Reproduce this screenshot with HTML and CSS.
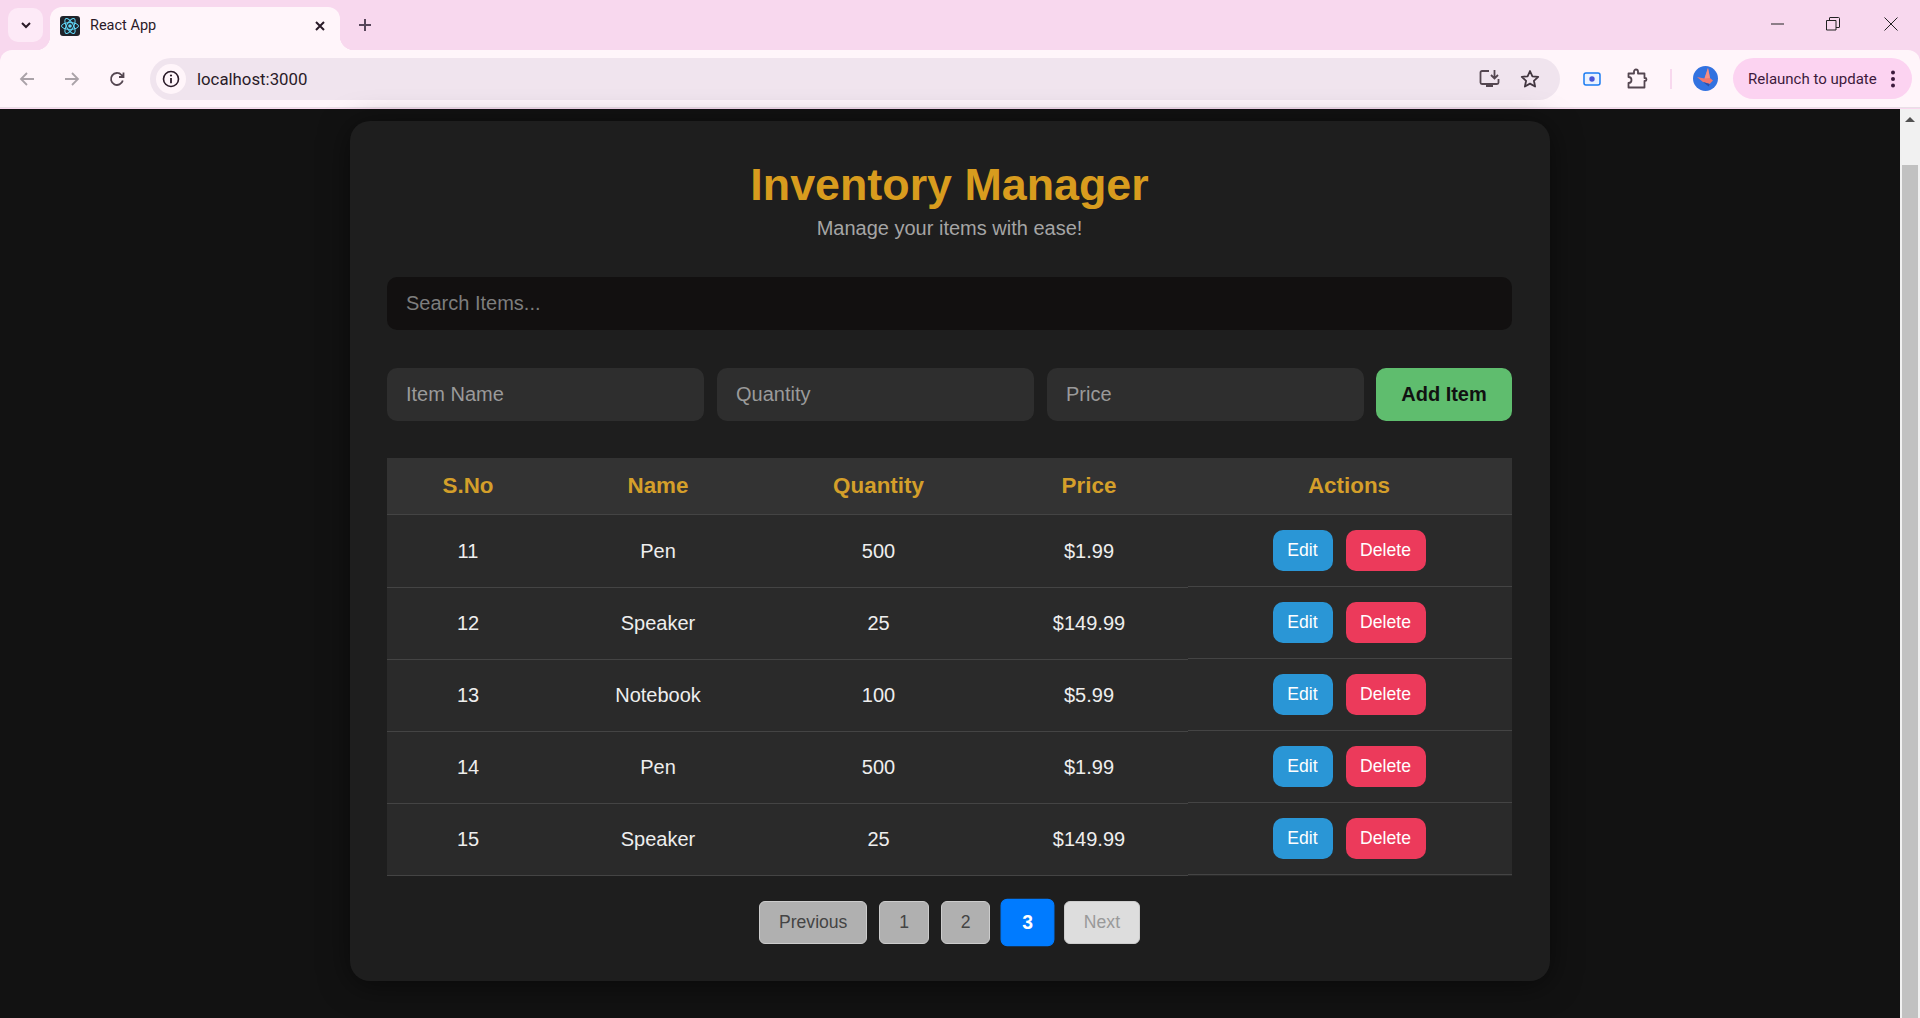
FILE: index.html
```html
<!DOCTYPE html>
<html lang="en">
<head>
    <meta charset="UTF-8">
    <meta name="viewport" content="width=device-width, initial-scale=1.0">
    <title>React App</title>
    <link rel="stylesheet" href="styles.css">
</head>
<body>

<header class="chrome">
    <div class="tabstrip">
        <button class="tab-search" type="button">
            <svg width="16" height="16" viewBox="0 0 16 16"><path d="M4 6l4 4 4-4" fill="none" stroke="#2a1a28" stroke-width="2"/></svg>
        </button>
        <div class="tab">
            <svg class="favicon" width="20" height="20" viewBox="0 0 20 20">
                <rect width="20" height="20" rx="3" fill="#20232a"/>
                <g fill="none" stroke="#61dafb" stroke-width="1">
                    <ellipse cx="10" cy="10" rx="8.500" ry="3.400"/>
                    <ellipse cx="10" cy="10" rx="8.500" ry="3.400" transform="rotate(60 10 10)"/>
                    <ellipse cx="10" cy="10" rx="8.500" ry="3.400" transform="rotate(120 10 10)"/>
                </g>
                <circle cx="10" cy="10" r="1.800" fill="#61dafb"/>
            </svg>
            <span class="tab-title">React App</span>
            <svg class="tab-close" width="12" height="12" viewBox="0 0 12 12"><path d="M2 2l8 8M10 2l-8 8" stroke="#2a1a28" stroke-width="2"/></svg>
        </div>
        <svg class="new-tab" width="14" height="14" viewBox="0 0 14 14"><path d="M7 1v12M1 7h12" stroke="#57465a" stroke-width="2"/></svg>
        <div class="window-controls">
            <svg width="14" height="14" viewBox="0 0 14 14"><path d="M0 7h13" stroke="#222" stroke-width="1"/></svg>
            <svg width="14" height="14" viewBox="0 0 14 14"><path d="M.5 3.500h9.500v9.500H.5zM3.500 3.500V1a.5.5 0 0 1 .5-.5h8.500a1 1 0 0 1 1 1V10a.5.5 0 0 1-.5.5H10" fill="none" stroke="#222" stroke-width="1"/></svg>
            <svg class="window-close" width="14" height="14" viewBox="0 0 14 14"><path d="M.5.5l13 13M13.500.5l-13 13" stroke="#222" stroke-width="1"/></svg>
        </div>
    </div>
    <div class="toolbar">
        <svg class="nav-icon" width="18" height="18" viewBox="0 0 18 18"><path d="M16 9H3M9 3L3 9l6 6" fill="none" stroke="#aaa2a8" stroke-width="1.800"/></svg>
        <svg class="nav-icon" width="18" height="18" viewBox="0 0 18 18"><path d="M2 9h13M9 3l6 6-6 6" fill="none" stroke="#aaa2a8" stroke-width="1.800"/></svg>
        <svg class="nav-icon" width="18" height="18" viewBox="0 0 18 18"><path d="M14.800 10.500A6 6 0 1 1 13.500 5L15 6.500M15.500 2.500v4.500H11" fill="none" stroke="#544650" stroke-width="1.800"/></svg>
        <div class="omnibox">
            <span class="site-info">
                <svg width="18" height="18" viewBox="0 0 18 18"><circle cx="9" cy="9" r="7.500" fill="none" stroke="#2a1a28" stroke-width="1.600"/><path d="M9 8v5.200" stroke="#2a1a28" stroke-width="1.800"/><circle cx="9" cy="5.500" r="1.100" fill="#2a1a28"/></svg>
            </span>
            <span class="url">localhost:3000</span>
            <svg class="omni-install" width="22" height="20" viewBox="0 0 22 20"><path d="M10 2H3a1.500 1.500 0 0 0-1.500 1.500v10A1.500 1.500 0 0 0 3 15h15a1.500 1.500 0 0 0 1.500-1.500V10M15.500 1v8M12 6l3.500 3.500L19 6" fill="none" stroke="#544650" stroke-width="1.800"/><path d="M7 15.500h7V18H7z" fill="#544650"/></svg>
            <svg class="omni-star" width="20" height="20" viewBox="0 0 20 20"><path d="M10 2l2.400 5.300 5.800.6-4.300 3.900 1.200 5.700L10 14.600l-5.100 2.900 1.200-5.700L1.800 7.900l5.800-.6z" fill="none" stroke="#423640" stroke-width="1.800" stroke-linejoin="round"/></svg>
        </div>
        <svg class="ext-record" width="18" height="14" viewBox="0 0 18 14"><rect x="1" y="1" width="16" height="12" rx="2" fill="#eaf2ff" stroke="#1a7bf2" stroke-width="1.500"/><circle cx="9" cy="7" r="2.700" fill="#4a55d8"/></svg>
        <svg class="ext-puzzle" width="22" height="22" viewBox="0 0 22 22"><path d="M2.500 5.500H8V3.500a2 2 0 0 1 4 0v2h6.500V10h.5a1.500 1.500 0 0 1 0 3h-.5v6.500H2.500V15c2 0 3-1.500 3-3s-1-3-3-3z" fill="none" stroke="#544650" stroke-width="1.800" stroke-linejoin="round"/></svg>
        <span class="divider"></span>
        <svg class="avatar" width="25" height="25" viewBox="0 0 25 25">
            <circle cx="12.500" cy="12.500" r="12.500" fill="#3272e0"/>
            <path d="M15 2l-3.500 10.500L4 11l6 5 6.700 2 3.300-3.500-3-2.500z" fill="#f0776e"/>
            <path d="M11.500 12.500L15 2l2 10z" fill="#f58f84"/>
            <path d="M10 16l6.700 2-1 2.500z" fill="#2b50a8"/>
        </svg>
        <div class="relaunch">
            <span>Relaunch to update</span>
            <svg width="6" height="18" viewBox="0 0 6 18"><circle cx="3" cy="2.500" r="2" fill="#3c1a3c"/><circle cx="3" cy="9" r="2" fill="#3c1a3c"/><circle cx="3" cy="15.500" r="2" fill="#3c1a3c"/></svg>
        </div>
    </div>
</header>

<div class="viewport">
    <main class="page">
        <section class="container">
            <h1>Inventory Manager</h1>
            <p class="subtitle">Manage your items with ease!</p>

            <input class="search-input" type="text" placeholder="Search Items...">

            <form class="add-form">
                <input type="text" placeholder="Item Name">
                <input type="text" placeholder="Quantity">
                <input type="text" placeholder="Price">
                <button class="add-btn" type="button">Add Item</button>
            </form>

            <table class="items">
                <colgroup>
                    <col class="col-sno">
                    <col class="col-name">
                    <col class="col-qty">
                    <col class="col-price">
                    <col class="col-actions">
                </colgroup>
                <thead>
                    <tr>
                        <th>S.No</th>
                        <th>Name</th>
                        <th>Quantity</th>
                        <th>Price</th>
                        <th class="actions-head">Actions</th>
                    </tr>
                </thead>
                <tbody>
                    <tr>
                        <td>11</td><td>Pen</td><td>500</td><td>$1.99</td>
                        <td class="actions"><button class="edit-btn" type="button">Edit</button><button class="delete-btn" type="button">Delete</button></td>
                    </tr>
                    <tr>
                        <td>12</td><td>Speaker</td><td>25</td><td>$149.99</td>
                        <td class="actions"><button class="edit-btn" type="button">Edit</button><button class="delete-btn" type="button">Delete</button></td>
                    </tr>
                    <tr>
                        <td>13</td><td>Notebook</td><td>100</td><td>$5.99</td>
                        <td class="actions"><button class="edit-btn" type="button">Edit</button><button class="delete-btn" type="button">Delete</button></td>
                    </tr>
                    <tr>
                        <td>14</td><td>Pen</td><td>500</td><td>$1.99</td>
                        <td class="actions"><button class="edit-btn" type="button">Edit</button><button class="delete-btn" type="button">Delete</button></td>
                    </tr>
                    <tr>
                        <td>15</td><td>Speaker</td><td>25</td><td>$149.99</td>
                        <td class="actions"><button class="edit-btn" type="button">Edit</button><button class="delete-btn" type="button">Delete</button></td>
                    </tr>
                </tbody>
            </table>

            <nav class="pagination">
                <button type="button">Previous</button>
                <button type="button">1</button>
                <button type="button">2</button>
                <button class="active" type="button">3</button>
                <button type="button" disabled>Next</button>
            </nav>
        </section>
    </main>
    <div class="scrollbar">
        <span class="scroll-up"></span>
        <span class="scroll-thumb"></span>
    </div>
</div>

</body>
</html>
```

FILE: styles.css
```css
* {
    box-sizing: border-box;
}
body {
    font-family: "Liberation Sans", Arial, sans-serif;
    background-color: #121212;
    margin: 0;
    height: 1018px;
    display: flex;
    flex-direction: column;
    overflow: hidden;
}

/* browser chrome */
.chrome {
    font-family: Roboto, "Noto Sans", sans-serif;
    background-color: #f8d8ee;
    color: #2a1a28;
    height: 109px;
    flex-shrink: 0;
}
.tabstrip {
    height: 50px;
    display: flex;
    align-items: flex-start;
}
.tab-search {
    width: 35px;
    height: 34px;
    margin: 8px 7px 0 8px;
    padding: 0;
    border: none;
    border-radius: 10px;
    background-color: #fdeaf7;
    display: flex;
    align-items: center;
    justify-content: center;
}
.tab {
    position: relative;
    width: 290px;
    height: 43px;
    margin-top: 7px;
    padding: 0 14px 6px 10px;
    background-color: #fff5fa;
    border-radius: 12px 12px 0 0;
    display: flex;
    align-items: center;
}
.tab::before,
.tab::after {
    content: "";
    position: absolute;
    bottom: 0;
    width: 14px;
    height: 14px;
}
.tab::before {
    left: -14px;
    background: radial-gradient(circle at 0 0, transparent 14px, #fff5fa 14.5px);
}
.tab::after {
    right: -14px;
    background: radial-gradient(circle at 100% 0, transparent 14px, #fff5fa 14.5px);
}
.favicon {
    flex-shrink: 0;
}
.tab-title {
    margin-left: 10px;
    font-size: 14.500px;
    flex: 1;
}
.new-tab {
    margin: 18px 0 0 18px;
}
.window-controls {
    margin: 17px 0 0 auto;
    display: flex;
    gap: 41px;
    padding-right: 22px;
}
.window-close {
    margin-left: 3px;
}
.toolbar {
    height: 58px;
    background-color: #fff5fa;
    border-radius: 12px 12px 0 0;
    border-bottom: 1px solid #e9dfe6;
    padding: 8px 8px 0 18px;
    display: flex;
    align-items: flex-start;
}
.nav-icon {
    margin: 12px 27px 0 0;
}
.nav-icon:nth-child(3) {
    margin-right: 24px;
}
.omnibox {
    width: 1411px;
    height: 42px;
    background-color: #f0e4ee;
    border-radius: 21px;
    display: flex;
    align-items: center;
    padding-left: 6px;
}
.site-info {
    width: 30px;
    height: 30px;
    border-radius: 50%;
    background-color: #fff5fa;
    display: flex;
    align-items: center;
    justify-content: center;
}
.url {
    margin-left: 11px;
    font-size: 16.800px;
    flex: 1;
}
.omni-star {
    margin: 0 20px 0 19px;
}
.ext-record {
    margin: 14px 0 0 23px;
}
.ext-puzzle {
    margin: 10px 0 0 25px;
}
.divider {
    width: 2px;
    height: 20px;
    margin: 11px 0 0 22px;
    background-color: #f8d8ee;
}
.avatar {
    margin: 8px 0 0 21px;
}
.relaunch {
    width: 179px;
    height: 41px;
    margin-left: 15px;
    padding: 0 16px 0 15px;
    border-radius: 21px;
    background-color: #fcd3f1;
    color: #3c1a3c;
    font-size: 15px;
    display: flex;
    align-items: center;
    justify-content: space-between;
}

/* page */
.viewport {
    flex: 1;
    display: flex;
    min-height: 0;
}
.page {
    flex: 1;
    padding-top: 12px;
}
.scrollbar {
    width: 20px;
    background-color: #f1f1f1;
    padding: 8px 2px 0 2px;
    display: flex;
    flex-direction: column;
}
.scroll-up {
    width: 0;
    height: 0;
    margin: 0 auto;
    border-left: 5px solid transparent;
    border-right: 5px solid transparent;
    border-bottom: 5px solid #505050;
}
.scroll-thumb {
    flex: 1;
    margin-top: 43px;
    background-color: #c1c1c1;
}
.container {
    width: 1200px;
    height: 860px;
    margin: 0 auto;
    padding: 38px 38px 0 37px;
    background-color: #1e1e1e;
    border-radius: 20px;
    box-shadow: 0 4px 30px rgba(0, 0, 0, 0.5);
}
h1 {
    margin: 0 0 7px 0;
    font-size: 44.800px;
    text-align: center;
    color: #d89c1e;
}
.subtitle {
    margin: 0 0 37px 0;
    font-size: 20px;
    text-align: center;
    color: #a5a5a5;
}
input {
    height: 53px;
    padding: 0 19px;
    border: none;
    border-radius: 10px;
    background-color: #2e2e2e;
    color: #eee;
    font-family: inherit;
    font-size: 20px;
}
input::placeholder {
    color: #9a9a9a;
}
.search-input {
    display: block;
    width: 100%;
    background-color: #121010;
    margin-bottom: 38px;
}
.search-input::placeholder {
    color: #7d7d7d;
}
.add-form {
    display: flex;
    gap: 13px;
    margin-bottom: 37px;
}
.add-form input {
    flex: 1;
    min-width: 0;
}
.add-btn {
    width: 136px;
    margin-left: -1px;
    flex-shrink: 0;
    border: none;
    border-radius: 10px;
    background-color: #5fbd6e;
    color: #111;
    font-family: inherit;
    font-size: 20px;
    font-weight: bold;
}
.items {
    width: 100%;
    table-layout: fixed;
    border-collapse: separate;
    border-spacing: 0;
    margin-bottom: 25px;
}
.col-sno { width: 162px; }
.col-name { width: 218px; }
.col-qty { width: 223px; }
.col-price { width: 198px; }
th, td {
    text-align: center;
    border-bottom: 1px solid #444;
}
th {
    height: 57px;
    background-color: #333;
    color: #d49f2a;
    font-size: 22.400px;
}
th.actions-head {
    padding-right: 3px;
}
td {
    height: 72px;
    background-color: #2a2a2a;
    color: #eee;
    font-size: 20px;
}
tbody tr:first-child td {
    height: 73px;
}
td.actions {
    padding: 1px 3px 3px 1px;
    border-bottom-color: transparent;
    box-shadow: inset 0 -1px 0 #444;
}
.actions button {
    height: 41px;
    border: none;
    border-radius: 10px;
    color: #fff;
    font-family: inherit;
    font-size: 17.600px;
    vertical-align: middle;
}
.edit-btn {
    width: 60px;
    padding: 0;
    background-color: #2a96d6;
    margin-right: 13px;
}
.delete-btn {
    width: 80px;
    padding: 0;
    background-color: #ec3a5b;
}
.pagination {
    display: flex;
    justify-content: center;
    gap: 12.400px;
}
.pagination button {
    height: 43px;
    padding: 0 18.700px;
    border: 1px solid #ccc;
    border-radius: 6px;
    background-color: #b0b0b0;
    color: #444;
    font-family: inherit;
    font-size: 17.600px;
}
.pagination button.active {
    background-color: #007bff;
    border-color: #007bff;
    color: #fff;
    font-weight: bold;
    transform: scale(1.1);
}
.pagination button:disabled {
    background-color: #ddd;
    color: #999;
}
```
